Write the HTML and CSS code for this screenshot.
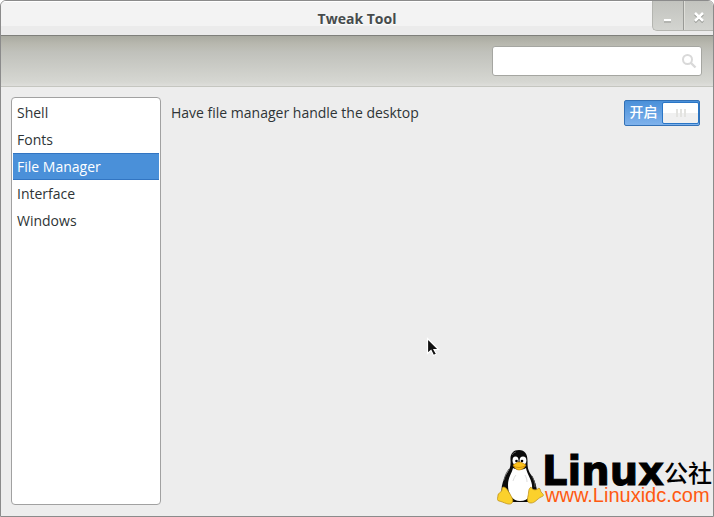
FILE: index.html
```html
<!DOCTYPE html>
<html lang="en">
<head>
    <meta charset="UTF-8">
    <meta name="viewport" content="width=device-width, initial-scale=1.0">
    <title>Tweak Tool</title>
    <link rel="stylesheet" href="styles.css">
</head>
<body>
    <div class="window">
        <header class="titlebar">
            <h1>Tweak Tool</h1>
            <div class="window-buttons">
                <button type="button" aria-label="Minimize">
                    <svg width="12" height="12" viewBox="0 0 12 12"><path d="M2 11h7" stroke="#999a96" stroke-width="1"/><path d="M2 9h7" stroke="#fff" stroke-width="2"/></svg>
                </button>
                <button type="button" aria-label="Close">
                    <svg width="12" height="12" viewBox="0 0 12 12"><path d="M2 3l8 8M10 3l-8 8" stroke="#888a85" stroke-width="2.5"/><path d="M2 2l8 8M10 2l-8 8" stroke="#fff" stroke-width="2.5"/></svg>
                </button>
            </div>
        </header>

        <div class="toolbar">
            <div class="search">
                <input type="text" aria-label="Search">
                <svg width="16" height="16" viewBox="0 0 16 16" fill="none" stroke="#d9d9d9" stroke-width="2"><circle cx="6.5" cy="5.5" r="4.5"/><path d="M10 9l4.500 4.500" stroke-width="2.400"/></svg>
            </div>
        </div>

        <main class="content">
            <nav class="sidebar">
                <a href="#shell">Shell</a>
                <a href="#fonts">Fonts</a>
                <a href="#file-manager" class="selected">File Manager</a>
                <a href="#interface">Interface</a>
                <a href="#windows">Windows</a>
            </nav>
            <section class="settings">
                <div class="setting">
                    <label for="desktop">Have file manager handle the desktop</label>
                    <label class="switch">
                        <input type="checkbox" id="desktop" checked>
                        <span class="switch-text">开启</span>
                        <span class="knob"><i></i><i></i><i></i></span>
                    </label>
                </div>
            </section>
        </main>

        <svg class="cursor" width="14" height="20" viewBox="0 0 14 20"><path d="M1.500 1.500v15l3.500-3 2.500 5 3-1.500-2.500-4.500h4.500z" fill="#111" stroke="#fff" stroke-width="1.200"/></svg>

        <div class="watermark">
            <svg width="48" height="56" viewBox="0 0 48 56">
                <path d="M22 1c-6 0-9 4-8.500 10 .5 7-1 9-4 14-3 5-5 11-5 16 0 5 4 10 10 12h17c6-2 10-7 8-14-1-6-3-10-6-14-3-5-3-8-3-13C30.500 5 28 1 22 1z" fill="#0b0b0b"/>
                <path d="M7 31c1-5 3-8 5-11M15 6c1-2 3-3 4-3M35 27c2 4 3 7 3 11" fill="none" stroke="#555" stroke-width="1"/>
                <path d="M16 19c-1 5-5 9-5 17 0 9 4 16 12 16 9 0 13-7 12-16-1-7-5-11-6-17-3 2-9 2-13 0z" fill="#fff"/>
                <path d="M16 32c1-3 2-5 3-6M30 33c0-3-1-5-2-7" fill="none" stroke="#ddd"/>
                <ellipse cx="18.500" cy="11.500" rx="3" ry="4" fill="#fff"/>
                <ellipse cx="26" cy="11.500" rx="3.400" ry="4" fill="#fff"/>
                <circle cx="19.500" cy="12" r="1.300"/>
                <circle cx="25" cy="12" r="1.300"/>
                <path d="M16 16c2-1 4-3 6-3 3 0 5 2 7 3-1 3-5 5-7 5s-5-2-6-5z" fill="#fcc21b" stroke="#b97900" stroke-width=".6"/>
                <path d="M16 17c4 2 8 2 12 0" fill="none" stroke="#b97900" stroke-width=".6"/>
                <path d="M7 38c3 1 4 4 6 7 2 4 4 6 2 9-3 3-8-1-13-2-3-1-1-3-1-6 0-2 3-2 4-5 0-2 0-3 2-3z" fill="#fbd12c" stroke="#b98a10" stroke-width=".7"/>
                <path d="M34 38c1 3 5 4 8 1 2 1 1 4 3 5 2 2 2 3-1 4-4 2-6 6-10 6-4 0-4-3-3-7 1-4 0-7 3-9z" fill="#fbd12c" stroke="#b98a10" stroke-width=".7"/>
            </svg>
            <div class="brand">
                <div class="brand-name"><strong>Linux</strong><span>公社</span></div>
                <div class="brand-url">www.Linuxidc.com</div>
            </div>
        </div>
    </div>
</body>
</html>
```
FILE: styles.css
```css
* {
    box-sizing: border-box;
}
body {
    margin: 0;
    font-family: "Open Sans", "Noto Sans CJK SC", sans-serif;
    font-size: 14px;
    color: #2e3436;
    background-color: #fff;
}
.window {
    position: relative;
    display: flex;
    flex-direction: column;
    min-height: 100vh;
    border: 1px solid #8b8b8b;
    border-radius: 6px 6px 0 0;
    background-color: #ededed;
    overflow: hidden;
}
.titlebar {
    position: relative;
    height: 35px;
    border-bottom: 1px solid #7f807b;
    background: linear-gradient(#fff 1px, #f3f3f3 1px, #f3f3f3 25px, #ebebeb 25px);
}
.titlebar h1 {
    margin: 0;
    font-size: 14px;
    line-height: 36px;
    text-align: center;
    color: #464b4c;
    text-shadow: 0 1px #fff;
}
.window-buttons {
    position: absolute;
    top: 0;
    right: 0;
    display: flex;
    height: 30px;
    border: 1px solid #b4b5b0;
    border-width: 0 0 1px 1px;
    border-radius: 0 0 0 5px;
    background: linear-gradient(#c2c3be, #d3d4d0);
    overflow: hidden;
}
.window-buttons button {
    display: flex;
    align-items: center;
    justify-content: center;
    width: 30px;
    padding: 2px 0 0;
    border: none;
    background: none;
}
.window-buttons button + button {
    border-left: 1px solid #999a96;
    box-shadow: inset 1px 0 #deded9;
}
.toolbar {
    display: flex;
    justify-content: flex-end;
    padding: 10px 11px;
    border-bottom: 1px solid #c5c6c0;
    background: linear-gradient(#a9aaa0, #b8b8af 8px, #c0c1bb 16px, #d6d7d2 46px, #dededb);
}
.search {
    position: relative;
    width: 210px;
}
.search input {
    display: block;
    width: 100%;
    height: 30px;
    padding: 0 28px 0 6px;
    border: 1px solid #a5a6a1;
    border-radius: 3px;
    background-color: #fff;
    font: inherit;
}
.search svg {
    position: absolute;
    top: 8px;
    right: 5px;
}
.content {
    flex: 1;
    display: flex;
    gap: 10px;
    padding: 10px 13px 11px 10px;
}
.sidebar {
    width: 150px;
    padding: 1px;
    border: 1px solid #a1a1a1;
    border-radius: 4px;
    background-color: #fff;
}
.sidebar a {
    display: block;
    height: 27px;
    padding: 0 4px;
    line-height: 28px;
    color: inherit;
    text-decoration: none;
}
.sidebar .selected {
    border: 1px solid #3275c2;
    border-width: 1px 0;
    line-height: 26px;
    background-color: #4a90d9;
    color: #fff;
}
.settings {
    flex: 1;
    padding-top: 3px;
}
.setting {
    display: flex;
    justify-content: space-between;
    line-height: 26px;
}
.switch {
    display: flex;
    width: 76px;
    height: 26px;
    padding: 1px 0;
    border: 1px solid #3471b5;
    border-radius: 2px;
    background: linear-gradient(#4a90d9, #7fb2ec);
    color: #fff;
}
.switch input {
    position: absolute;
    opacity: 0;
}
.switch-text {
    flex: 1;
    text-align: center;
    font-weight: 500;
    line-height: 20px;
}
.knob {
    display: flex;
    align-items: center;
    justify-content: center;
    gap: 2px;
    width: 37px;
    border: 1px solid #2a76c6;
    border-radius: 2px;
    background: linear-gradient(#fff 50%, #f0f0f0 50%);
}
.knob i {
    width: 2px;
    height: 8px;
    background-color: #e3e3e0;
}
.cursor {
    position: absolute;
    left: 425px;
    top: 336px;
}
.watermark {
    position: absolute;
    right: 1px;
    bottom: 11px;
    display: flex;
    align-items: flex-end;
}
.watermark svg {
    margin-right: -3px;
}
.brand-name {
    display: flex;
    align-items: flex-end;
    color: #000;
}
.brand-name strong {
    font: bold 40px/28px "DejaVu Sans", sans-serif;
    -webkit-text-stroke: 1px #000;
}
.brand-name span {
    font: 500 24px/26px "Noto Sans CJK SC", sans-serif;
}
.brand-url {
    padding-left: 3px;
    font: 20px/20px "Liberation Sans", sans-serif;
    color: #ff5a10;
}
```
